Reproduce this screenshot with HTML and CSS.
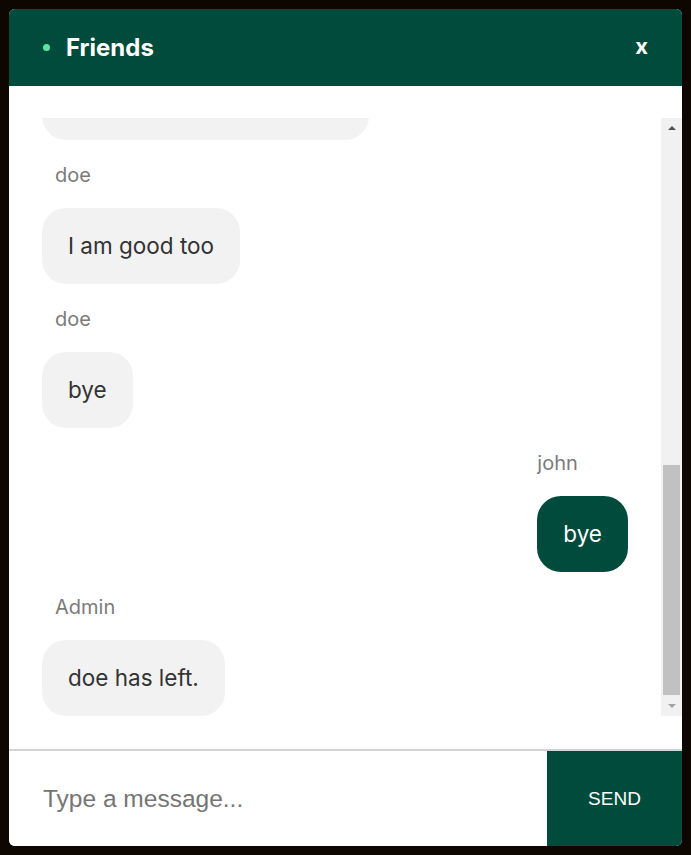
FILE: index.html
```html
<!DOCTYPE html>
<html lang="en">
<head>
<meta charset="utf-8">
<title>Friends chat</title>
<link rel="stylesheet" href="styles.css">
</head>
<body>
<div class="chat">
  <header class="chat-header">
    <span class="status-dot"></span>
    <h1 class="chat-title">Friends</h1>
    <button class="close-btn" type="button">x</button>
  </header>
  <section class="chat-body">
    <div class="scroll-area">
      <div class="messages">
        <div class="msg">
          <div class="msg-label">doe</div>
          <div class="bubble">I'm fine, thanks! And you?</div>
        </div>
        <div class="msg">
          <div class="msg-label">doe</div>
          <div class="bubble">I am good too</div>
        </div>
        <div class="msg">
          <div class="msg-label">doe</div>
          <div class="bubble">bye</div>
        </div>
        <div class="msg msg-self">
          <div class="msg-label">john</div>
          <div class="bubble">bye</div>
        </div>
        <div class="msg">
          <div class="msg-label">Admin</div>
          <div class="bubble">doe has left.</div>
        </div>
      </div>
      <div class="scrollbar">
        <div class="sb-btn sb-up"><span class="tri-up"></span></div>
        <div class="sb-track"><div class="sb-thumb"></div></div>
        <div class="sb-btn sb-down"><span class="tri-down"></span></div>
      </div>
    </div>
  </section>
  <footer class="chat-footer">
    <input class="msg-input" type="text" placeholder="Type a message...">
    <button class="send-btn" type="button">SEND</button>
  </footer>
</div>
</body>
</html>
```
FILE: styles.css
```css
* { box-sizing: border-box; }

html, body {
  margin: 0;
  height: 100%;
}

body {
  background: #0e0701;
  padding: 9px;
  font-family: Inter, "Noto Sans", sans-serif;
}

.chat {
  width: 673px;
  height: 837px;
  background: #fff;
  border-radius: 6px;
  overflow: hidden;
  display: flex;
  flex-direction: column;
}

.chat-header {
  height: 77px;
  flex: none;
  background: #014b3c;
  display: flex;
  align-items: center;
  padding: 0 34px 0 34px;
}

.status-dot {
  width: 7px;
  height: 7px;
  border-radius: 50%;
  background: #5fe3a1;
  margin-right: 16px;
}

.chat-title {
  margin: 0;
  color: #fff;
  font-size: 24px;
  line-height: 28px;
  font-weight: 700;
  flex: 1;
}

.close-btn {
  border: 0;
  background: none;
  padding: 0;
  color: #fff;
  font-family: Inter, sans-serif;
  font-weight: 700;
  font-size: 22px;
  line-height: 22px;
  margin-top: -3px;
}

.chat-body {
  flex: 1;
  min-height: 0;
  padding: 32px 0 33px;
  display: flex;
}

.scroll-area {
  flex: 1;
  display: flex;
  min-height: 0;
}

.messages {
  flex: 1;
  min-width: 0;
  overflow: hidden;
  display: flex;
  flex-direction: column;
  justify-content: flex-end;
  padding: 0 33px;
}

.msg {
  flex: none;
  display: flex;
  flex-direction: column;
  align-items: flex-start;
  margin-top: 23px;
}

.msg-label {
  font-size: 20px;
  line-height: 24px;
  color: #7b7b7b;
  padding-left: 13px;
  margin-bottom: 21px;
}

.bubble {
  background: #f2f2f2;
  color: #333;
  font-size: 22.5px;
  line-height: 26px;
  padding: 25px 26px;
  border-radius: 24px;
}

.msg-self {
  align-items: flex-start;
  align-self: flex-end;
}

.msg-self .msg-label {
  padding-left: 0;
}

.msg-self .bubble {
  background: #014b3c;
  color: #fff;
}

.scrollbar {
  width: 21px;
  flex: none;
  background: #f1f1f1;
  display: flex;
  flex-direction: column;
}

.sb-btn {
  height: 20px;
  flex: none;
  display: flex;
  align-items: center;
  justify-content: center;
}

.tri-up {
  width: 0;
  height: 0;
  border-left: 4px solid transparent;
  border-right: 4px solid transparent;
  border-bottom: 4px solid #505050;
}

.tri-down {
  width: 0;
  height: 0;
  border-left: 4px solid transparent;
  border-right: 4px solid transparent;
  border-top: 4px solid #a3a3a3;
}

.sb-track {
  flex: 1;
  display: flex;
  flex-direction: column;
  justify-content: flex-end;
  padding: 0 2px 1px;
}

.sb-thumb {
  height: 230px;
  background: #c1c1c1;
}

.chat-footer {
  height: 97px;
  flex: none;
  border-top: 2px solid #d3d3d3;
  display: flex;
}

.msg-input {
  flex: 1;
  min-width: 0;
  border: 0;
  outline: none;
  padding: 0 0 0 34px;
  font-family: "Liberation Sans", Arial, sans-serif;
  font-size: 24.5px;
  color: #333;
  background: #fff;
}

.msg-input::placeholder {
  color: #757575;
}

.send-btn {
  width: 135px;
  flex: none;
  border: 0;
  background: #014b3c;
  color: #fff;
  font-family: "Liberation Sans", Arial, sans-serif;
  font-size: 19px;
}
```
